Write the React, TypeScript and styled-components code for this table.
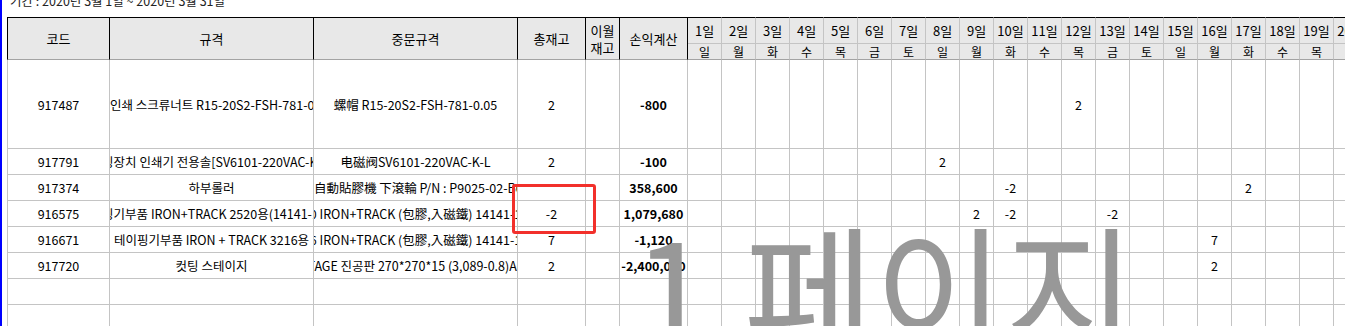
import React from "react";
import styled, { createGlobalStyle } from "styled-components";

const GlobalStyle = createGlobalStyle`
  body {
    margin: 0;
    background: #fff;
    font-family: "Noto Sans CJK KR", "Noto Sans", sans-serif;
    color: #000;
  }
`;

const Page = styled.div`
  position: relative;
  height: 326px;
  overflow: hidden;
  border-left: 2px solid #0000ff;
`;

const Title = styled.div`
  display: flow-root;
  height: 17px;
  padding-left: 8px;
  font-size: 12.5px;
  line-height: 14px;
  color: #222;
  span {
    display: block;
    margin-top: -6px;
  }
`;

const Sheet = styled.div`
  margin-left: 5px;
  display: grid;
  grid-template-columns: 103px 204px 204px 68px 34px 68px repeat(20, 34px);
  grid-template-rows: 27px 16px 89px repeat(8, 26px);
`;

const HeadCell = styled.div<{ $first?: boolean }>`
  grid-row: 1 / span 2;
  display: flex;
  flex-direction: column;
  align-items: center;
  justify-content: center;
  background: #e8e8e8;
  border-top: 1px solid #000;
  border-right: 1px solid #000;
  border-bottom: 1px solid #a3a3a3;
  border-left: ${(p) => (p.$first ? "1px solid #000" : "none")};
  font-size: 13px;
  line-height: 17px;
  white-space: nowrap;
`;

const DayHead = styled.div`
  grid-row: 1;
  display: flex;
  align-items: center;
  justify-content: center;
  background: #e8e8e8;
  border-top: 1px solid #000;
  border-right: 1px solid #c4c4c4;
  border-bottom: 1px solid #c4c4c4;
  font-size: 13px;
  white-space: nowrap;
  overflow: hidden;
`;

const WeekHead = styled.div`
  grid-row: 2;
  display: flex;
  align-items: center;
  justify-content: center;
  background: #e8e8e8;
  border-right: 1px solid #c4c4c4;
  border-bottom: 1px solid #a3a3a3;
  font-size: 12px;
  line-height: 14px;
  white-space: nowrap;
  overflow: hidden;
`;

const Cell = styled.div<{ $first?: boolean; $bold?: boolean }>`
  display: flex;
  align-items: center;
  justify-content: center;
  overflow: hidden;
  white-space: nowrap;
  border-right: 1px solid #c4c4c4;
  border-bottom: 1px solid #c4c4c4;
  border-left: ${(p) => (p.$first ? "1px solid #c4c4c4" : "none")};
  font-size: 12.5px;
  font-weight: ${(p) => (p.$bold ? 700 : 400)};
`;

const Mark = styled.div`
  position: absolute;
  left: 510px;
  top: 184px;
  width: 84px;
  height: 50px;
  box-sizing: border-box;
  border: 3px solid #f2302b;
  border-radius: 3px;
`;

const Watermark = styled.div`
  position: absolute;
  left: 631px;
  top: 214px;
  font-size: 142px;
  line-height: 1;
  color: #989898;
  white-space: pre;
  pointer-events: none;
`;

type Row = {
  code: string;
  spec: string;
  cn: string;
  total: string;
  pl: string;
  days: Record<number, string>;
};

const rows: Row[] = [
  {
    code: "917487",
    spec: "CR 인쇄 스크류너트 R15-20S2-FSH-781-0.05",
    cn: "螺帽 R15-20S2-FSH-781-0.05",
    total: "2",
    pl: "-800",
    days: { 12: "2" },
  },
  {
    code: "917791",
    spec: "코팅장치 인쇄기 전용솔[SV6101-220VAC-K-L]",
    cn: "电磁阀SV6101-220VAC-K-L",
    total: "2",
    pl: "-100",
    days: { 8: "2" },
  },
  {
    code: "917374",
    spec: "하부롤러",
    cn: "全自動貼膠機 下滾輪 P/N : P9025-02-B01",
    total: "",
    pl: "358,600",
    days: { 10: "-2", 17: "2" },
  },
  {
    code: "916575",
    spec: "테이핑기부품 IRON+TRACK 2520용(14141-1001)",
    cn: "2520 IRON+TRACK (包膠,入磁鐵) 14141-1001",
    total: "-2",
    pl: "1,079,680",
    days: { 9: "2", 10: "-2", 13: "-2" },
  },
  {
    code: "916671",
    spec: "테이핑기부품 IRON + TRACK 3216용",
    cn: "3216 IRON+TRACK (包膠,入磁鐵) 14141-1002",
    total: "7",
    pl: "-1,120",
    days: { 16: "7" },
  },
  {
    code: "917720",
    spec: "컷팅 스테이지",
    cn: "STAGE 진공판 270*270*15  (3,089-0.8)A60",
    total: "2",
    pl: "-2,400,000",
    days: { 16: "2" },
  },
];

const weekdays = ["일", "월", "화", "수", "목", "금", "토"];
const days = Array.from({ length: 20 }, (_, i) => i + 1);

export default function App() {
  const filled = [...rows, null, null];
  return (
    <>
      <GlobalStyle />
      <Page>
        <Title>
          <span>기간 : 2020년 3월 1일 ~ 2020년 3월 31일</span>
        </Title>
        <Sheet>
          <HeadCell $first>코드</HeadCell>
          <HeadCell>규격</HeadCell>
          <HeadCell>중문규격</HeadCell>
          <HeadCell>총재고</HeadCell>
          <HeadCell>
            <span>이월</span>
            <span>재고</span>
          </HeadCell>
          <HeadCell>손익계산</HeadCell>
          {days.map((d) => (
            <DayHead key={"d" + d}>{d}일</DayHead>
          ))}
          {days.map((d) => (
            <WeekHead key={"w" + d}>{weekdays[(d - 1) % 7]}</WeekHead>
          ))}
          {filled.map((r, i) => (
            <React.Fragment key={i}>
              <Cell $first>{r?.code}</Cell>
              <Cell>{r?.spec}</Cell>
              <Cell>{r?.cn}</Cell>
              <Cell>{r?.total}</Cell>
              <Cell />
              <Cell $bold>{r?.pl}</Cell>
              {days.map((d) => (
                <Cell key={d}>{r?.days[d]}</Cell>
              ))}
            </React.Fragment>
          ))}
        </Sheet>
        <Mark />
        <Watermark>1 페이지</Watermark>
      </Page>
    </>
  );
}
